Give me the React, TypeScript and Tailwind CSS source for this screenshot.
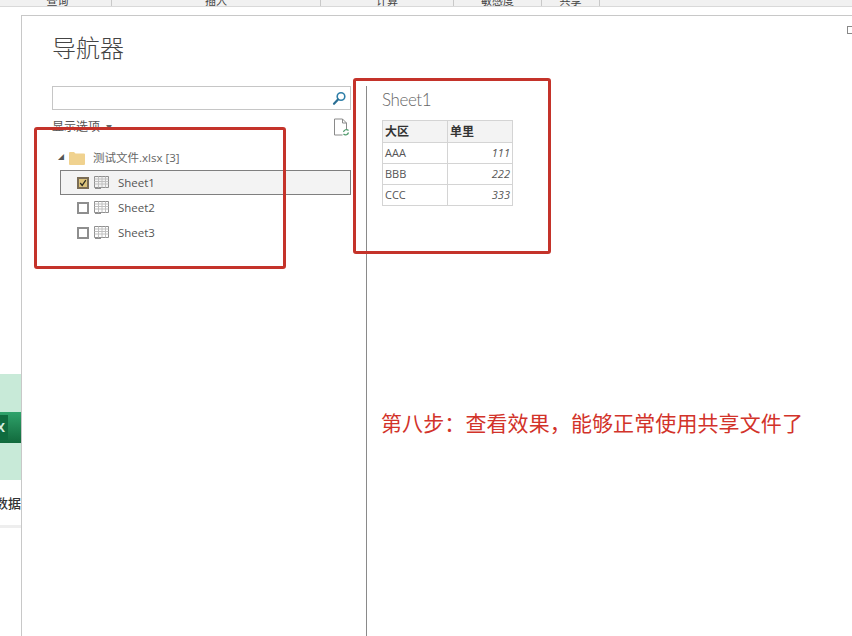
const CJK = 'font-["Open_Sans","Noto_Sans_CJK_SC",sans-serif]'

const ribbonGroups = [
  { label: '查询', width: 'w-[112px] pl-[4px]' },
  { label: '插入', width: 'w-[209px]' },
  { label: '计算', width: 'w-[133px]' },
  { label: '敏感度', width: 'w-[88px]' },
  { label: '共享', width: 'w-[58px]' },
]

const rows = [
  { name: 'AAA', value: '111' },
  { name: 'BBB', value: '222' },
  { name: 'CCC', value: '333' },
]

function TableIcon() {
  return (
    <svg width="16" height="15" viewBox="0 0 16 15" fill="none" stroke="#8f8f8f" strokeWidth="1">
      <path d="M0.5 1.5h14v11h-14z" />
      <path d="M0.5 4h14M0.5 6.5h14M0.5 9h14M4.5 1.5v11M8 1.5v11M11.5 1.5v11" stroke="#c0c0c0" />
      <path d="M1 13.5h6" />
    </svg>
  )
}

function Checkbox({ checked }: { checked?: boolean }) {
  if (checked) {
    return (
      <div className="w-3 h-3 border-2 border-[#7a6c55] bg-[#dcc27a] flex items-center justify-center">
        <svg width="10" height="10" viewBox="0 0 10 10" fill="none" stroke="#2c2a20" strokeWidth="1.6">
          <path d="M1.5 5l2.5 3 4.5-6.5" />
        </svg>
      </div>
    )
  }
  return <div className="w-3 h-3 border-2 border-[#8e8e8e] bg-white" />
}

function SheetRow({ name, checked }: { name: string; checked?: boolean }) {
  return (
    <div
      className={`flex items-center h-[25px] pl-[16px] border ${
        checked ? 'border-[#7f7f7f] bg-[#f3f3f3]' : 'border-transparent'
      }`}
    >
      <Checkbox checked={checked} />
      <div className="ml-[5px]">
        <TableIcon />
      </div>
      <span className="ml-[8px] text-[11.5px] text-[#555]">{name}</span>
    </div>
  )
}

export default function App() {
  return (
    <div className={`relative w-[852px] h-[636px] overflow-hidden bg-white ${CJK}`}>
      {/* Ribbon, cut off at the top of the shot */}
      <div className="flex h-[7px] bg-[#f1f1f1] border-b border-[#d9d9d9] overflow-hidden">
        {ribbonGroups.map((group) => (
          <div key={group.label} className={`${group.width} h-[6px] border-r border-[#c9c9c9] flex justify-center items-end`}>
            <span className="text-[11px] leading-[14px] -mb-[2px] text-[#444]">{group.label}</span>
          </div>
        ))}
      </div>

      <div className="flex h-[629px] pt-[8px]">
        {/* Page behind the dialog */}
        <div className="w-[21px] shrink-0 pt-[359px] overflow-hidden">
          <div className="h-[106px] bg-[#c8ead8] pt-[38px]">
            <div className="h-[31px] bg-gradient-to-b from-[#2fa36b] to-[#11693c] flex items-center">
              <div className="w-[8px] h-[25px] bg-[#0f6b3e] flex items-center justify-end pr-[3px]">
                <span className="text-[13px] font-bold text-[#d8f0e2] leading-none">X</span>
              </div>
            </div>
          </div>
          <div className="h-[48px] pt-[2px] flex items-center justify-end border-b-[3px] border-[#eeeeee] whitespace-nowrap overflow-hidden">
            <span className="text-[13px] font-medium text-[#333] shrink-0">数据</span>
          </div>
        </div>

        {/* Navigator dialog */}
        <div className="relative flex-1 flex border-l border-t border-[#c8c8c8] pt-[70px]">
          <div className="absolute top-[10px] right-0 w-[5px] h-[8px] border border-r-0 border-[#888]" />
          <h1 className="absolute left-[30px] top-[14px] text-[24px] leading-[36px] font-light text-[#444]">导航器</h1>

          <div className="w-[344px] shrink-0 pl-[30px] pr-[15px]">
            <div className="h-[24px] border border-[#c6c6c6] flex items-center justify-end pr-[3px]">
              <svg width="15" height="15" viewBox="0 0 15 15" fill="none">
                <circle cx="9" cy="5.5" r="3.8" stroke="#2f7fa8" strokeWidth="1.6" />
                <path d="M6 8.5L2 12.8" stroke="#2a6f94" strokeWidth="2.2" strokeLinecap="round" />
              </svg>
            </div>

            <div className="flex items-center justify-between h-[34px]">
              <span className="flex items-center text-[12px] text-[#555]">
                显示选项
                <span className="ml-[6px] text-[6px] text-[#666]">▼</span>
              </span>
              <svg width="17" height="19" viewBox="0 0 17 19" fill="none" className="mr-[1px]">
                <path d="M1.5 1h8l4 4v6M1.5 1v16h8M9.5 1v4h4" stroke="#8a8a8a" />
                <path d="M10.5 14a3 3 0 0 1 5-1.5M15.5 14.5a3 3 0 0 1-5 1.5" stroke="#4f9a6b" strokeWidth="1.2" />
              </svg>
            </div>

            <div className="flex items-center h-[25px] mt-[1px] pl-[6px]">
              <span className="text-[6px] w-[7px] text-[#555]">◢</span>
              <svg width="16" height="14" viewBox="0 0 16 14" className="ml-[4px]">
                <path d="M0 2a1 1 0 0 1 1-1h4l1.5 1.5H15a1 1 0 0 1 1 1V13a1 1 0 0 1-1 1H1a1 1 0 0 1-1-1z" fill="#f0d28f" />
              </svg>
              <span className="ml-[8px] text-[11.5px] text-[#666]">测试文件.xlsx [3]</span>
            </div>
            <div className="ml-[8px]">
              <SheetRow name="Sheet1" checked />
              <SheetRow name="Sheet2" />
              <SheetRow name="Sheet3" />
            </div>
          </div>

          {/* Preview pane */}
          <div className="flex-1 border-l border-[#8a8a8a] pl-[15px]">
            <h2 className='pt-[1px] font-["Lato",sans-serif] text-[17px] tracking-[-0.4px] leading-[26px] font-light text-[#666]'>Sheet1</h2>
            <table className="mt-[7px] w-[131px] table-fixed border-collapse text-[11px] text-[#555]">
              <thead>
                <tr className="h-[22px] bg-[#f3f3f3]">
                  <th className="w-[65px] border border-[#d4d4d4] pl-[2px] text-left text-[12px] text-[#333]">大区</th>
                  <th className="border border-[#d4d4d4] pl-[2px] text-left text-[12px] text-[#333]">单里</th>
                </tr>
              </thead>
              <tbody>
                {rows.map((row) => (
                  <tr key={row.name} className="h-[21px]">
                    <td className="border border-[#d4d4d4] pl-[2px]">{row.name}</td>
                    <td className="border border-[#d4d4d4] pr-[2px] text-right italic">{row.value}</td>
                  </tr>
                ))}
              </tbody>
            </table>
            <p className="mt-[202px] -ml-[1px] text-[21px] tracking-[0.1px] leading-[30px] whitespace-nowrap text-[#d2332a]">
              第八步：查看效果，能够正常使用共享文件了
            </p>
          </div>
        </div>
      </div>

      {/* Red annotation boxes drawn over the screenshot */}
      <div className="absolute left-[34px] top-[127px] w-[252px] h-[142px] border-[3px] border-[#c4332a] rounded-[3px]" />
      <div className="absolute left-[353px] top-[78px] w-[198px] h-[176px] border-[3px] border-[#c4332a] rounded-[3px]" />
    </div>
  )
}
